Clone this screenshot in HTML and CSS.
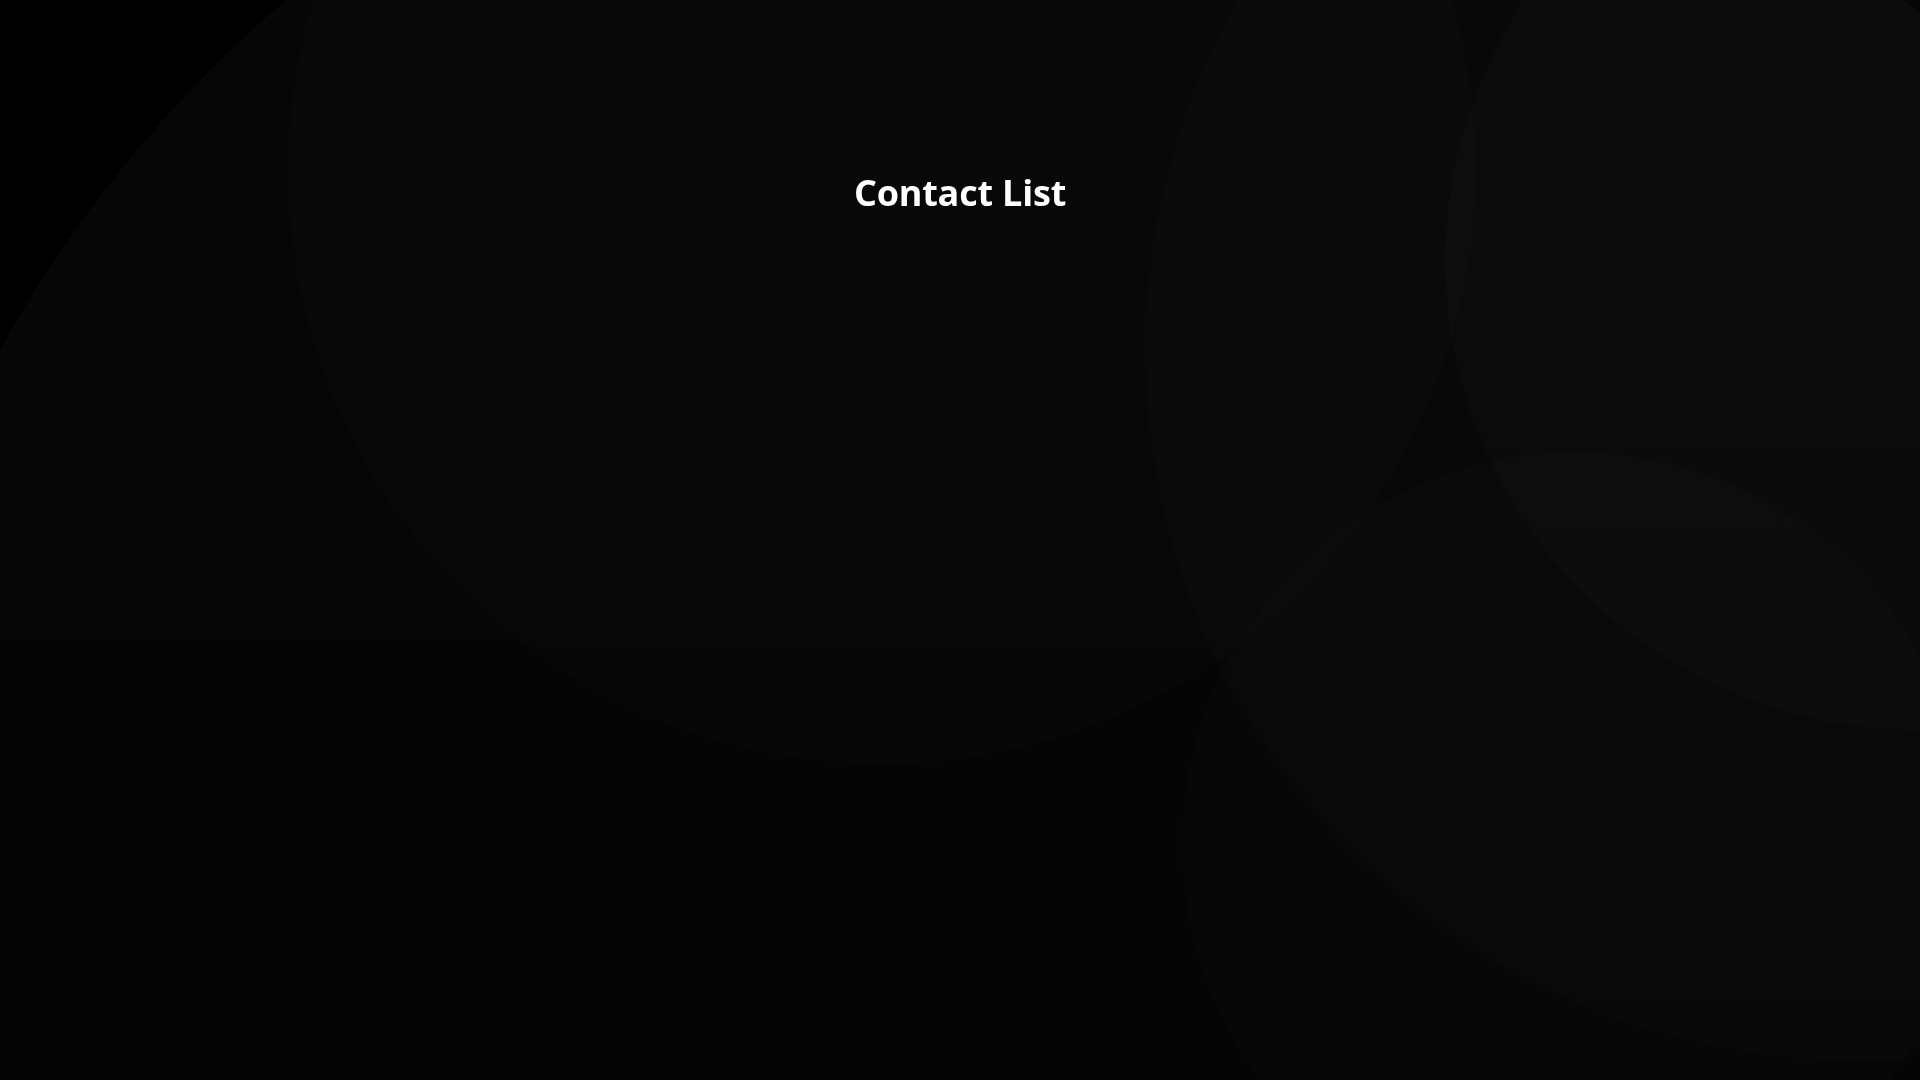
FILE: index.html
```html
<!DOCTYPE html>
<html lang="en">
<head>
<meta charset="utf-8">
<title>Contact List</title>
<link rel="stylesheet" href="styles.css">
</head>
<body>
  <div class="backdrop" aria-hidden="true">
    <span class="orb orb-big"></span>
    <span class="orb orb-1"></span>
    <span class="orb orb-2"></span>
    <span class="orb orb-3"></span>
    <span class="orb orb-4"></span>
  </div>
  <main class="page">
    <h1 class="title">Contact List</h1>
  </main>
</body>
</html>
```

FILE: styles.css
```css
* { box-sizing: border-box; }

html, body {
  margin: 0;
  padding: 0;
  width: 100%;
  height: 100%;
}

body {
  background: #000;
  color: #fff;
  font-family: "Open Sans", "Noto Sans", "Liberation Sans", sans-serif;
  overflow: hidden;
}

.backdrop {
  position: fixed;
  inset: 0;
  overflow: hidden;
  z-index: 0;
}

.orb {
  position: absolute;
  border-radius: 50%;
  display: block;
}

.orb-big {
  left: -155px;
  top: -297px;
  width: 2500px;
  height: 2500px;
  background: linear-gradient(to bottom, rgba(255,255,255,0.026) 0%, rgba(255,255,255,0.010) 100%);
}

.orb-1 {
  left: 288px;
  top: -424px;
  width: 1188px;
  height: 1188px;
  background: rgba(255,255,255,0.013);
}

.orb-2 {
  left: 1145px;
  top: -360px;
  width: 1420px;
  height: 1420px;
  background: rgba(255,255,255,0.012);
}

.orb-3 {
  left: 1445px;
  top: -210px;
  width: 940px;
  height: 940px;
  background: rgba(255,255,255,0.014);
}

.orb-4 {
  left: 1182px;
  top: 452px;
  width: 786px;
  height: 786px;
  background: rgba(255,255,255,0.012);
}

.page {
  position: relative;
  z-index: 1;
  display: flex;
  flex-direction: column;
  align-items: center;
  padding-top: 171px;
}

.title {
  margin: 0;
  font-size: 36px;
  font-weight: 700;
  line-height: 43px;
  letter-spacing: -0.2px;
  color: #fff;
}
```
